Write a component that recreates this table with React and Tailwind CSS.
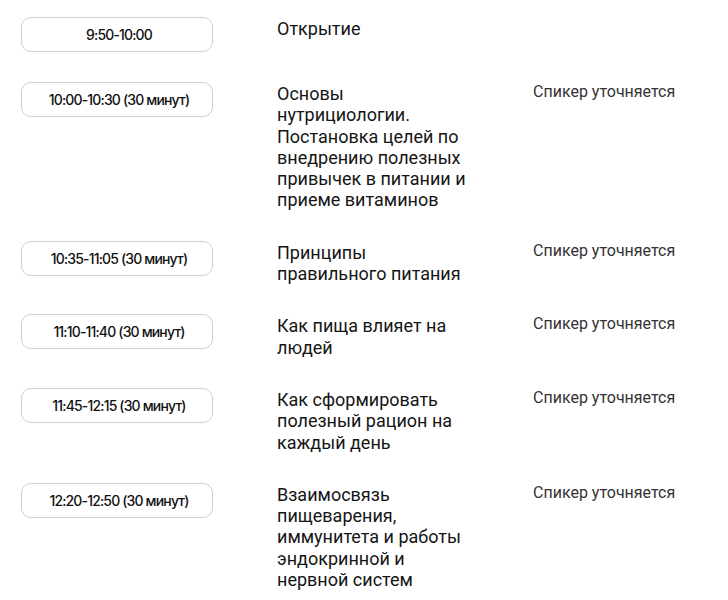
import React from "react";

const rows = [
  { time: "9:50-10:00", title: ["Открытие"], speaker: false },
  {
    time: "10:00-10:30 (30 минут)",
    title: [
      "Основы",
      "нутрициологии.",
      "Постановка целей по",
      "внедрению полезных",
      "привычек в питании и",
      "приеме витаминов",
    ],
    speaker: true,
  },
  { time: "10:35-11:05 (30 минут)", title: ["Принципы", "правильного питания"], speaker: true },
  { time: "11:10-11:40 (30 минут)", title: ["Как пища влияет на", "людей"], speaker: true },
  {
    time: "11:45-12:15 (30 минут)",
    title: ["Как сформировать", "полезный рацион на", "каждый день"],
    speaker: true,
  },
  {
    time: "12:20-12:50 (30 минут)",
    title: [
      "Взаимосвязь",
      "пищеварения,",
      "иммунитета и работы",
      "эндокринной и",
      "нервной систем",
    ],
    speaker: true,
  },
];

export default function App() {
  return (
    <div className="w-[728px] h-[600px] overflow-hidden bg-white pl-[21px] pt-[17px]">
      <div className="flex flex-col gap-[30px]">
        {rows.map((r, i) => (
          <div key={i} className="flex items-start">
            <div
              className="w-[192px] h-[35px] shrink-0 rounded-[10px] border border-[#cfcfcf] flex items-center justify-center pl-[4px] text-[14px] font-medium tracking-[-0.06em] text-[#111]"
              style={{ fontFamily: "Inter, sans-serif" }}
            >
              {r.time}
            </div>
            <div
              className="ml-[64px] w-[256px] pt-[1px] text-[18px] leading-[21.3px] text-[#151515]"
              style={{ fontFamily: "Roboto, sans-serif" }}
            >
              {r.title.map((l, j) => (
                <div key={j} className="whitespace-nowrap">
                  {l}
                </div>
              ))}
            </div>
            {r.speaker && (
              <div
                className="text-[16px] leading-[20px] text-[#333] font-normal whitespace-nowrap"
                style={{ fontFamily: "Roboto, sans-serif" }}
              >
                Спикер уточняется
              </div>
            )}
          </div>
        ))}
      </div>
    </div>
  );
}
